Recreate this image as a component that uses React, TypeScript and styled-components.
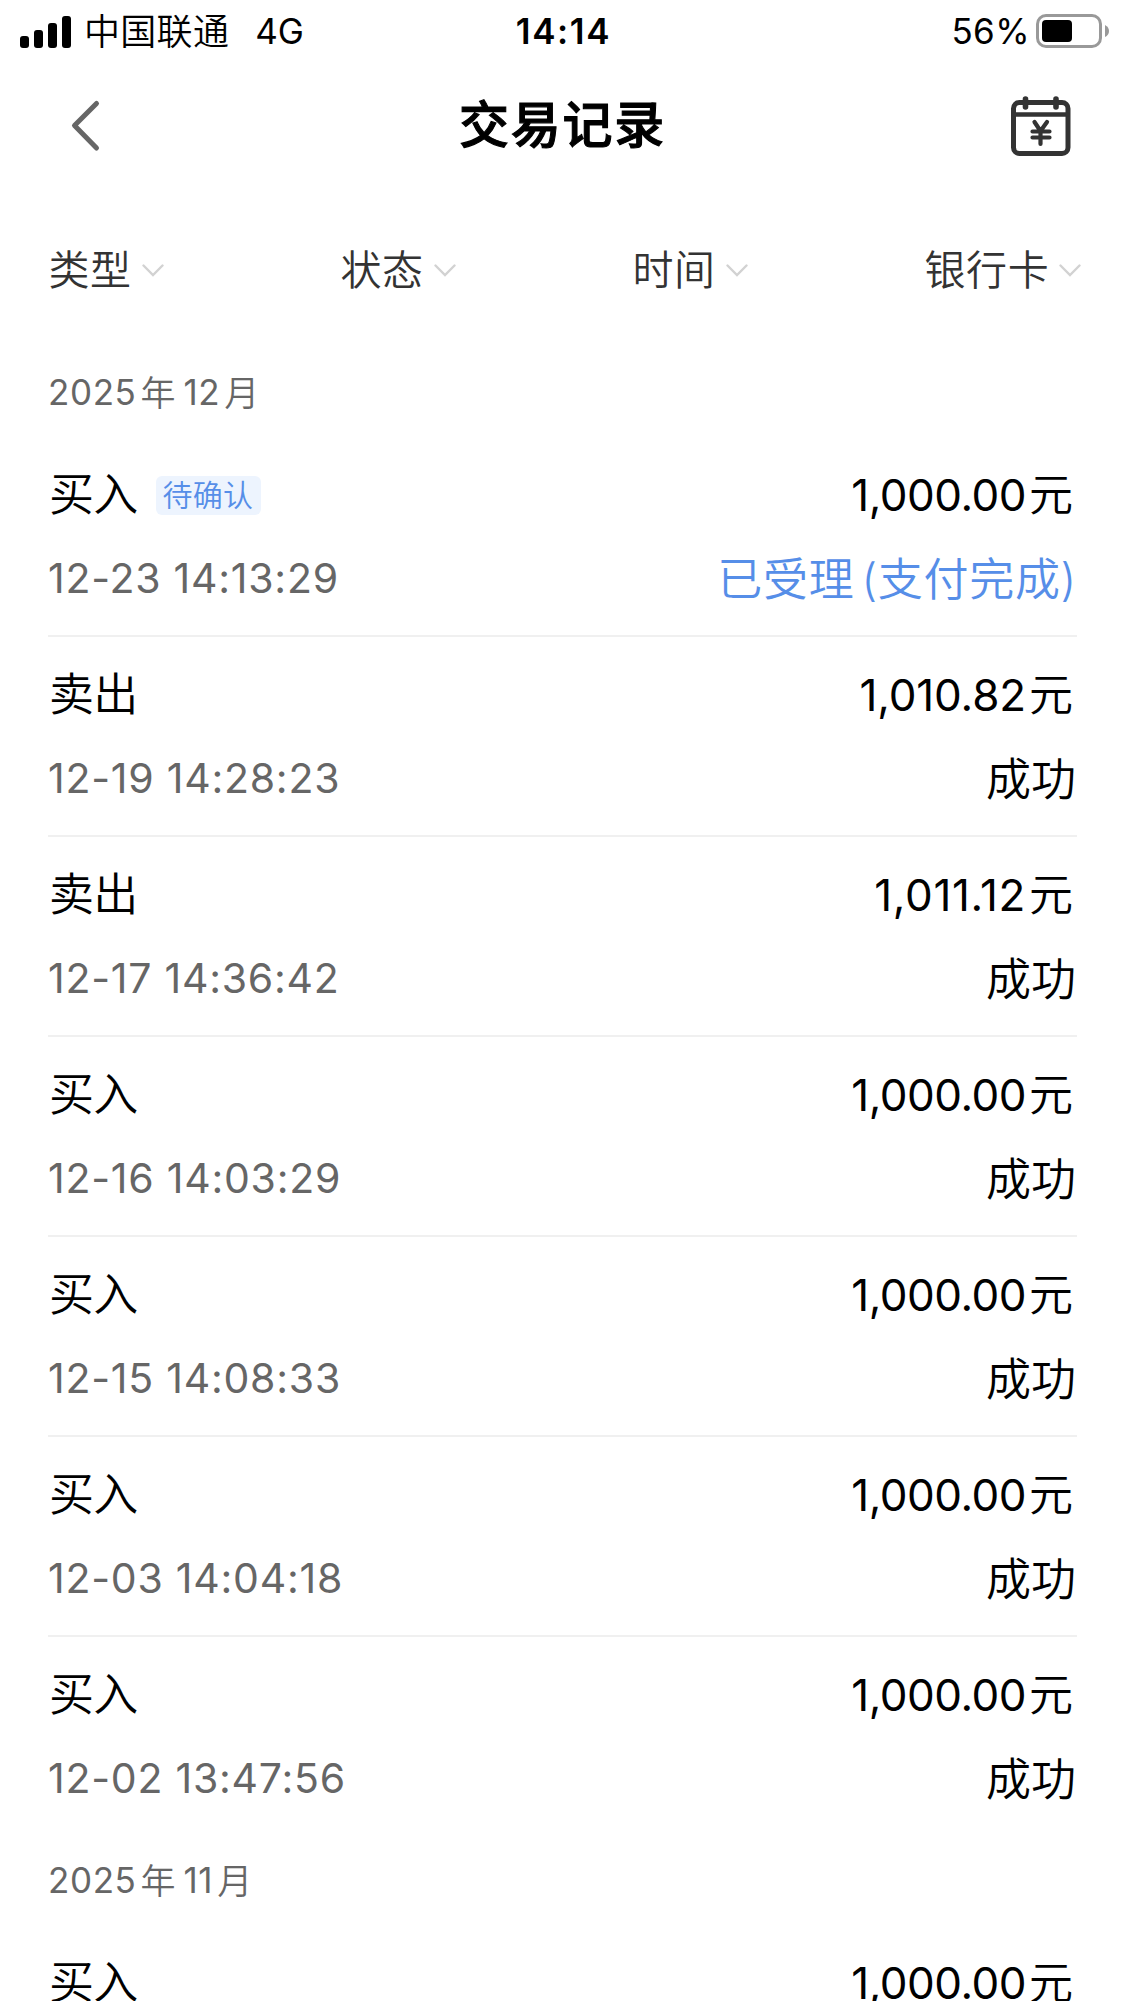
import React from 'react';
import styled, { createGlobalStyle } from 'styled-components';

const GlobalStyle = createGlobalStyle`
  * { box-sizing: border-box; }
  body {
    margin: 0;
    background: #fff;
    color: #000;
    font-family: Inter, "Noto Sans CJK SC", sans-serif;
    font-weight: 400;
  }
`;

const Screen = styled.main`
  width: 1125px;
  height: 2001px;
  overflow: hidden;
  background: #fff;
  display: flex;
  flex-direction: column;
`;

const StatusBar = styled.header`
  flex: none;
  height: 63px;
  display: grid;
  grid-template-columns: 1fr auto 1fr;
  align-items: center;
  padding: 0 15px 0 20px;
  font-size: 35px;
  line-height: 63px;
`;

const StatusSide = styled.div<{ $end?: boolean }>`
  display: flex;
  align-items: center;
  justify-content: ${(p) => (p.$end ? 'flex-end' : 'flex-start')};
`;

const Carrier = styled.span`
  margin-left: 13px;
  padding-top: 2px;
  font-size: 36px;
  font-weight: 350;
  letter-spacing: 0.3px;
  line-height: 61px;
`;

const Network = styled.span`
  margin-left: 26px;
`;

const Clock = styled.span`
  padding-right: 3px;
  font-weight: 600;
  letter-spacing: 1.6px;
`;

const Percent = styled.span`
  margin-right: 6px;
  letter-spacing: 0.4px;
`;

const NavBar = styled.nav`
  flex: none;
  height: 126px;
  display: grid;
  grid-template-columns: 120px 1fr 120px;
  align-items: center;
  padding: 0 53px 0 53px;
`;

const IconButton = styled.button<{ $end?: boolean }>`
  display: flex;
  justify-content: ${(p) => (p.$end ? 'flex-end' : 'flex-start')};
  padding: 0;
  border: 0;
  background: none;
`;

const Title = styled.h1`
  margin: 0;
  padding-bottom: 2px;
  text-align: center;
  font-size: 50px;
  font-weight: 500;
  -webkit-text-stroke: 1.1px #000;
  line-height: 70px;
  letter-spacing: 1.8px;
`;

const Filters = styled.div`
  flex: none;
  height: 160px;
  display: grid;
  grid-template-columns: repeat(4, 292px);
  align-items: center;
  padding: 2px 0 0 48.5px;
`;

const FilterItem = styled.div`
  display: flex;
  align-items: center;
  gap: 10px;
  font-size: 41px;
  font-weight: 350;
  line-height: 60px;
  letter-spacing: 0.6px;
  color: #333;
`;

const List = styled.section`
  flex: none;
  padding: 0 48px;
`;

const Month = styled.h2`
  margin: 0;
  height: 87px;
  display: flex;
  align-items: center;
  font-size: 35px;
  font-weight: 400;
  line-height: 87px;
  color: #666;
`;

const MonthNumber = styled.span`
  letter-spacing: 0.6px;
`;

const MonthUnit = styled.span`
  padding: 1px 8px 0 4px;
  font-weight: 350;
`;

const Row = styled.article<{ $line: boolean }>`
  height: 200px;
  padding: 25px 0 23px;
  display: flex;
  flex-direction: column;
  gap: 18px;
  border-bottom: 2px solid ${(p) => (p.$line ? '#f0f0f0' : 'transparent')};

  &:first-of-type {
    height: 201px;
    padding-top: 26px;
  }
`;

const Line = styled.div`
  display: flex;
  justify-content: space-between;
  align-items: center;
  height: 66px;
  line-height: 66px;
`;

const Kind = styled.div`
  display: flex;
  align-items: center;
  padding: 0 0 0 1px;
  font-size: 45px;
  font-weight: 350;
  letter-spacing: -0.8px;
`;

const Badge = styled.span`
  margin-left: 19px;
  height: 39px;
  padding: 0 8px 0 6px;
  border-radius: 6px;
  background: #edf4fe;
  color: #568ee8;
  font-size: 30px;
  letter-spacing: 0.3px;
  line-height: 39px;
`;

const Amount = styled.div`
  display: flex;
  padding: 0 4px 1px 0;
  font-size: 44px;
`;

const Digits = styled.span<{ $spacing: number }>`
  letter-spacing: ${(p) => p.$spacing}px;
`;

const Unit = styled.span`
  margin-left: 3px;
  font-weight: 350;
`;

const Time = styled.time`
  padding-bottom: 2px;
  font-size: 41px;
  letter-spacing: 0.76px;
  color: #666;
`;

const Status = styled.div<{ $pending?: boolean }>`
  display: flex;
  gap: 7px;
  padding: 2px ${(p) => (p.$pending ? 0 : 1)}px 0 0;
  font-size: 45px;
  font-weight: 350;
  letter-spacing: ${(p) => (p.$pending ? 0.7 : 0)}px;
  color: ${(p) => (p.$pending ? '#568ee8' : '#000')};
`;

const SignalIcon = () => (
  <svg width="51" height="34" viewBox="0 0 51 34" fill="#000">
    <rect x="0" y="21" width="9" height="12" rx="3" />
    <rect x="14" y="15" width="9" height="18" rx="3" />
    <rect x="28" y="8" width="9" height="25" rx="3" />
    <rect x="42" y="1" width="9" height="32" rx="3" />
  </svg>
);

const BatteryIcon = () => (
  <svg width="74" height="36" viewBox="0 0 74 36">
    <rect x="1.5" y="1.5" width="63" height="31" rx="8.5" fill="none" stroke="#999" strokeWidth="3" />
    <rect x="6" y="6" width="30" height="22" rx="4" fill="#000" />
    <path d="M69 11 Q73 13 73 17 Q73 21 69 23 Z" fill="#999" />
  </svg>
);

const BackIcon = () => (
  <svg width="52" height="60" viewBox="0 0 52 60" fill="none">
    <path d="M43.5 7.5 21.5 29.5 43.5 52" stroke="#666" strokeWidth="5" strokeLinecap="round" strokeLinejoin="round" />
  </svg>
);

const CalendarIcon = () => (
  <svg width="62" height="62" viewBox="0 0 62 62" fill="none" stroke="#333" strokeLinecap="round" strokeLinejoin="round">
    <rect x="3.5" y="7.5" width="54.5" height="51" rx="6" strokeWidth="5" />
    <path d="M4 19.5H57" strokeWidth="4.6" />
    <path d="M15.5 4V12M46 4V12" strokeWidth="5.6" />
    <path d="M24.5 27 30.5 36 37 27M22.5 36.5H39.5M22.5 42.5H39.5M30.5 36V49" strokeWidth="4.2" />
  </svg>
);

const ChevronIcon = () => (
  <svg width="22" height="16" viewBox="0 0 22 16" fill="none">
    <path d="M1.5 3.5 11 13 20.5 3.5" stroke="#d2d2d2" strokeWidth="2.4" strokeLinecap="round" />
  </svg>
);

interface Trade {
  kind: string;
  badge?: string;
  amount: string;
  time?: string;
  status?: string;
  note?: string;
}

interface MonthGroup {
  year: string;
  month: string;
  trades: Trade[];
}

const groups: MonthGroup[] = [
  {
    year: '2025',
    month: '12',
    trades: [
      { kind: '买入', badge: '待确认', amount: '1,000.00', time: '12-23 14:13:29', status: '已受理', note: '(支付完成)' },
      { kind: '卖出', amount: '1,010.82', time: '12-19 14:28:23', status: '成功' },
      { kind: '卖出', amount: '1,011.12', time: '12-17 14:36:42', status: '成功' },
      { kind: '买入', amount: '1,000.00', time: '12-16 14:03:29', status: '成功' },
      { kind: '买入', amount: '1,000.00', time: '12-15 14:08:33', status: '成功' },
      { kind: '买入', amount: '1,000.00', time: '12-03 14:04:18', status: '成功' },
      { kind: '买入', amount: '1,000.00', time: '12-02 13:47:56', status: '成功' },
    ],
  },
  {
    year: '2025',
    month: '11',
    trades: [{ kind: '买入', amount: '1,000.00' }],
  },
];

const filters = ['类型', '状态', '时间', '银行卡'];

const digitSpacing = (amount: string) => (amount.split('1').length - 2) * 0.38 - 0.5;

const TradeRow = ({ trade, line }: { trade: Trade; line: boolean }) => (
  <Row $line={line}>
    <Line>
      <Kind>
        {trade.kind}
        {trade.badge && <Badge>{trade.badge}</Badge>}
      </Kind>
      <Amount>
        <Digits $spacing={digitSpacing(trade.amount)}>{trade.amount}</Digits>
        <Unit>元</Unit>
      </Amount>
    </Line>
    {trade.time && (
      <Line>
        <Time>{trade.time}</Time>
        <Status $pending={Boolean(trade.note)}>
          <span>{trade.status}</span>
          {trade.note && <span>{trade.note}</span>}
        </Status>
      </Line>
    )}
  </Row>
);

export default function App() {
  return (
    <Screen>
      <GlobalStyle />
      <StatusBar>
        <StatusSide>
          <SignalIcon />
          <Carrier>中国联通</Carrier>
          <Network>4G</Network>
        </StatusSide>
        <Clock>14:14</Clock>
        <StatusSide $end>
          <Percent>56%</Percent>
          <BatteryIcon />
        </StatusSide>
      </StatusBar>
      <NavBar>
        <IconButton aria-label="返回">
          <BackIcon />
        </IconButton>
        <Title>交易记录</Title>
        <IconButton $end aria-label="日历">
          <CalendarIcon />
        </IconButton>
      </NavBar>
      <Filters>
        {filters.map((name) => (
          <FilterItem key={name}>
            {name}
            <ChevronIcon />
          </FilterItem>
        ))}
      </Filters>
      {groups.map((group) => (
        <List key={group.month}>
          <Month>
            <MonthNumber>{group.year}</MonthNumber>
            <MonthUnit>年</MonthUnit>
            <MonthNumber>{group.month}</MonthNumber>
            <MonthUnit>月</MonthUnit>
          </Month>
          {group.trades.map((trade, i) => (
            <TradeRow key={i} trade={trade} line={i < group.trades.length - 1} />
          ))}
        </List>
      ))}
    </Screen>
  );
}
